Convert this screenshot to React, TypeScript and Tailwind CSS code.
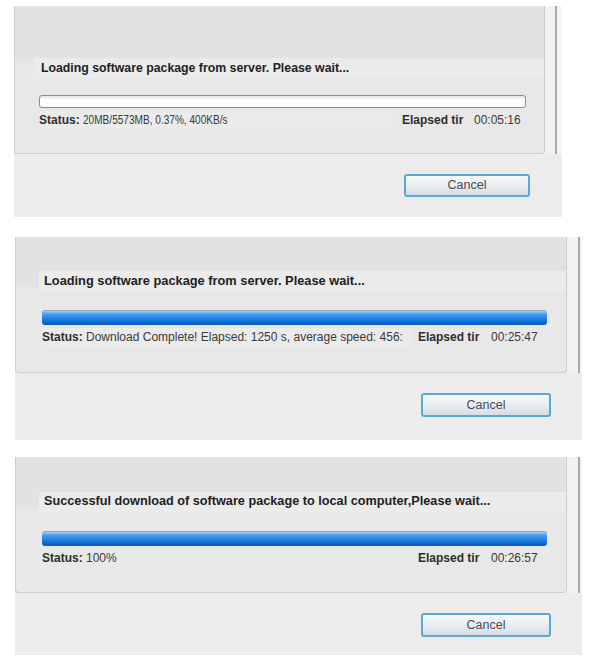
import React from "react";

const font = { fontFamily: '"Liberation Sans", Arial, sans-serif' };

function Bar(props: { cls: string; filled: boolean }) {
	if (props.filled) {
		return (
			<div
				className={
					"rounded-[3px] border-t border-[#8fa7bf] bg-[linear-gradient(to_bottom,#a9d0f3_0%,#4a9eec_22%,#1f82e3_55%,#0a66cf_85%,#0a58b3_100%)] " +
					props.cls
				}
			></div>
		);
	}
	return (
		<div
			className={
				"rounded-[3px] border border-[#8c8c8c] bg-[linear-gradient(to_bottom,#e2e2e2_0%,#ffffff_35%,#fbfbfb_100%)] " +
				props.cls
			}
		></div>
	);
}

function CancelButton(props: { cls: string }) {
	return (
		<div
			className={
				"flex items-center justify-center rounded-[3px] border-2 border-[#5aa8d6] bg-[linear-gradient(to_bottom,#f7f8fa_0%,#e9edf1_50%,#d6dde4_100%)] text-[12.5px] text-[#4a4a58] " +
				props.cls
			}
		>
			Cancel
		</div>
	);
}

function Panel(props) {
	return (
		<div className={"bg-[#ececec] " + props.outer}>
			<div className={"flex " + props.rowH}>
				<div
					className={
						"flex flex-col rounded-b-[4px] border-b border-l border-r border-[#cdcdcd] bg-[linear-gradient(to_bottom,#e2e2e2_0%,#e2e2e2_35%,#e8e8e8_40%,#e8e8e8_100%)] " +
						props.box
					}
				>
					<div
						className={
							"flex h-[20px] items-center bg-[#ebebeb] font-bold whitespace-nowrap text-[#222] " +
							props.band
						}
					>
						{props.message}
					</div>
					<Bar cls={props.bar} filled={props.filled} />
					<div
						className={
							"flex h-[14px] items-center text-[12px] text-[#3a3a3a] " + props.status
						}
					>
						<div className={"whitespace-nowrap overflow-hidden " + props.statusW}>
							<span className="font-bold text-[#2e2e2e]">Status: </span>
							<span className={props.valueCls}>{props.statusText}</span>
						</div>
						<div className={"font-bold text-[#2e2e2e] " + props.elapsedW}>
							Elapsed tir
						</div>
						<div>{props.time}</div>
					</div>
				</div>
				<div className={"bg-[#f2f2f2] " + props.strip}></div>
				<div className="w-[2px] bg-[#a8a8a8]"></div>
				<div className="flex-1 bg-[#f5f5f5]"></div>
			</div>
			<div className={"flex flex-col " + props.bottomH}>
				<CancelButton cls={props.button} />
			</div>
		</div>
	);
}

export default function App() {
	return (
		<div style={font} className="w-[589px] h-[663px] bg-white overflow-hidden pt-[6px]">
			<Panel
				outer="ml-[14px] w-[548px]"
				rowH="h-[148px]"
				box="w-[531px]"
				band="mt-[52px] ml-[19px] pl-[7px] text-[12.3px]"
				bar="mt-[17px] ml-[24px] w-[487px] h-[13px]"
				filled={false}
				status="mt-[5px] ml-[24px]"
				statusW="w-[352px] mr-[11px] bg-[#ebebeb]"
				valueCls="inline-block origin-left scale-x-[0.84]"
				elapsedW="w-[72px]"
				statusText="20MB/5573MB, 0.37%, 400KB/s"
				time="00:05:16"
				strip="w-[10px]"
				bottomH="h-[63px]"
				button="ml-[390px] mt-[20px] w-[126px] h-[23px]"
				message="Loading software package from server. Please wait..."
			/>
			<Panel
				outer="ml-[15px] mt-[20px] w-[567px]"
				rowH="h-[136px]"
				box="w-[552px]"
				band="mt-[34px] ml-[23px] pl-[5px] text-[12.8px]"
				bar="mt-[19px] ml-[26px] w-[505px] h-[15px]"
				filled={true}
				status="mt-[5px] ml-[26px]"
				statusW="w-[368px] mr-[8px] bg-[#ebebeb]"
				valueCls=""
				elapsedW="w-[73px]"
				statusText="Download Complete! Elapsed: 1250 s, average speed: 456:"
				time="00:25:47"
				strip="w-[11px]"
				bottomH="h-[67px]"
				button="ml-[406px] mt-[20px] w-[130px] h-[24px]"
				message="Loading software package from server. Please wait..."
			/>
			<Panel
				outer="ml-[15px] mt-[17px] w-[567px]"
				rowH="h-[136px]"
				box="w-[552px]"
				band="mt-[35px] ml-[23px] pl-[5px] text-[12.7px]"
				bar="mt-[19px] ml-[26px] w-[505px] h-[15px]"
				filled={true}
				status="mt-[5px] ml-[26px]"
				statusW="w-[368px] mr-[8px]"
				valueCls=""
				elapsedW="w-[73px]"
				statusText="100%"
				time="00:26:57"
				strip="w-[11px]"
				bottomH="h-[62px]"
				button="ml-[406px] mt-[20px] w-[130px] h-[24px]"
				message="Successful download of software package to local computer,Please wait..."
			/>
		</div>
	);
}
